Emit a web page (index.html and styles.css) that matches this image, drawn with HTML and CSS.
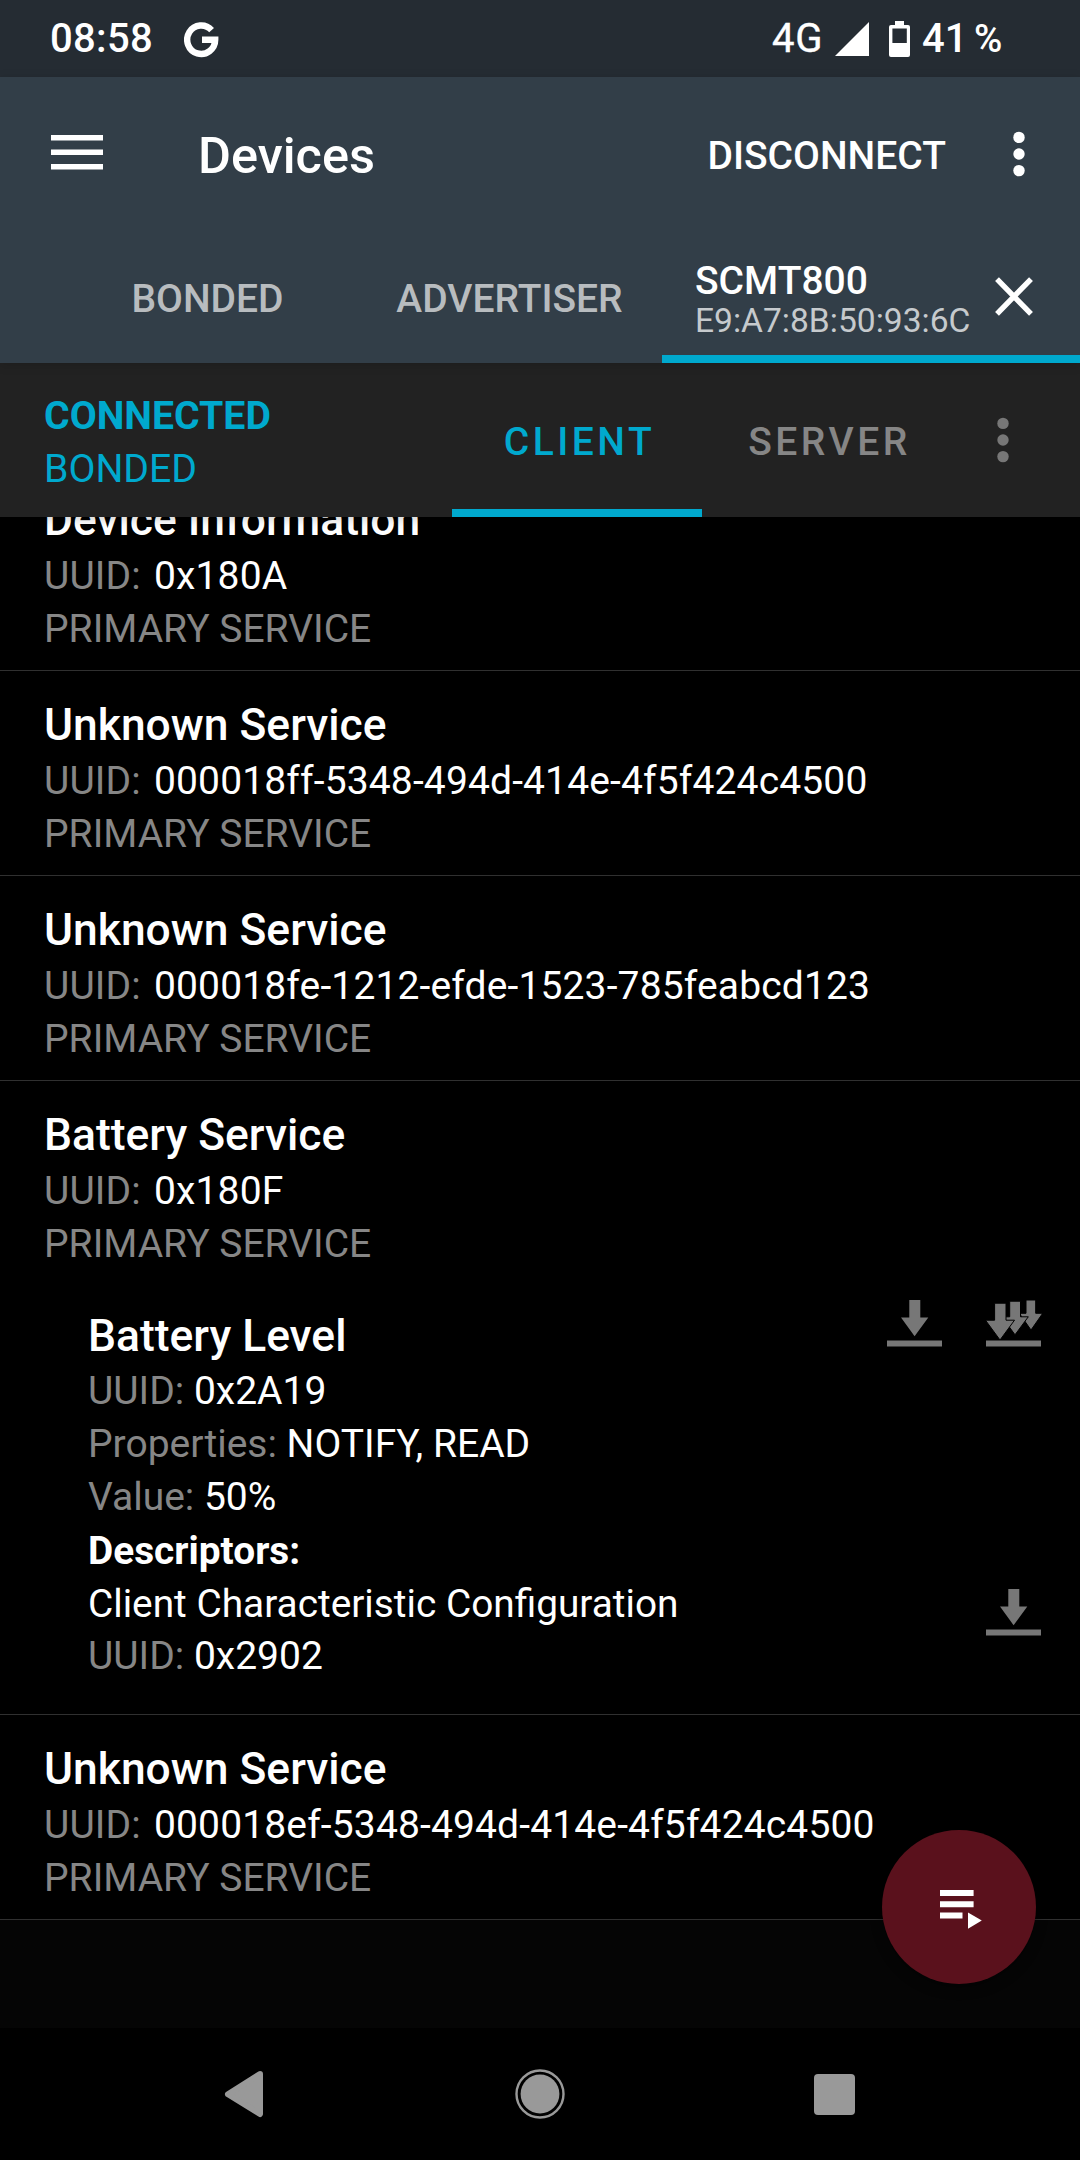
FILE: index.html
```html
<!DOCTYPE html>
<html lang="en">
<head>
  <meta charset="UTF-8">
  <meta name="viewport" content="width=device-width, initial-scale=1.0">
  <title>Devices</title>
  <link rel="stylesheet" href="styles.css">
</head>
<body>
  <div class="status-bar">
    <span class="clock">08:58</span>
    <svg class="google" width="36" height="36" viewBox="0 0 36 36">
      <path d="M27.6 8.2 A14 14.2 0 1 0 31.2 17.8 H18" fill="none" stroke="#fff" stroke-width="6.4"/>
    </svg>
    <span class="network">4G</span>
    <svg class="signal" width="34" height="34" viewBox="0 0 34 34"><path d="M34 0V34H0z" fill="#fff"/></svg>
    <svg class="battery" width="21" height="36" viewBox="0 0 21 36">
      <path d="M6 0h9v4h4a2 2 0 0 1 2 2v28a2 2 0 0 1-2 2H2a2 2 0 0 1-2-2V6a2 2 0 0 1 2-2h4z" fill="#fff"/>
      <path d="M3.4 7.5h14.4v14.5H3.4z" fill="#252c33"/>
    </svg>
    <span class="level">41</span>
    <span class="percent">%</span>
  </div>

  <header>
    <div class="toolbar">
      <svg class="menu" width="52" height="36" viewBox="0 0 52 36">
        <path d="M0 0h52v5.6H0zM0 14.5h52v5.6H0zM0 29h52v5.6H0z" fill="#fff"/>
      </svg>
      <h1>Devices</h1>
      <span class="disconnect">DISCONNECT</span>
      <svg class="more" width="12" height="46" viewBox="0 0 12 46">
        <circle cx="6" cy="6.4" r="5.7"/><circle cx="6" cy="23" r="5.7"/><circle cx="6" cy="39.6" r="5.7"/>
      </svg>
    </div>
    <div class="tabs">
      <div class="tab">BONDED</div>
      <div class="tab">ADVERTISER</div>
      <div class="tab active">
        <div class="device">
          <div class="name">SCMT800</div>
          <div class="address">E9:A7:8B:50:93:6C</div>
        </div>
        <svg class="close" width="38" height="39" viewBox="0 0 38 39">
          <path d="M2 2.2L36 36.8M36 2.2L2 36.8" stroke="#fff" stroke-width="5.4"/>
        </svg>
      </div>
    </div>
  </header>

  <div class="connection">
    <div class="state">
      <div class="connected">CONNECTED</div>
      <div>BONDED</div>
    </div>
    <div class="mode active">CLIENT</div>
    <div class="mode">SERVER</div>
    <svg class="more grey" width="12" height="46" viewBox="0 0 12 46">
      <circle cx="6" cy="6.4" r="5.7"/><circle cx="6" cy="23" r="5.7"/><circle cx="6" cy="39.6" r="5.7"/>
    </svg>
  </div>

  <main>
    <section class="service">
      <h2>Device Information</h2>
      <p class="uuid"><span class="label">UUID:</span>0x180A</p>
      <p class="type">PRIMARY SERVICE</p>
    </section>
    <section class="service">
      <h2>Unknown Service</h2>
      <p class="uuid"><span class="label">UUID:</span>000018ff-5348-494d-414e-4f5f424c4500</p>
      <p class="type">PRIMARY SERVICE</p>
    </section>
    <section class="service">
      <h2>Unknown Service</h2>
      <p class="uuid"><span class="label">UUID:</span>000018fe-1212-efde-1523-785feabcd123</p>
      <p class="type">PRIMARY SERVICE</p>
    </section>
    <section class="service expanded">
      <h2>Battery Service</h2>
      <p class="uuid"><span class="label">UUID:</span>0x180F</p>
      <p class="type">PRIMARY SERVICE</p>
      <div class="characteristic">
        <div class="row">
          <h2>Battery Level</h2>
          <div class="actions">
            <svg width="55" height="48" viewBox="0 0 55 48">
              <path d="M22.3 0h11v17.5h8L27.6 36.3 14 17.5h8.3zM0 40.5h55v6H0z"/>
            </svg>
            <svg width="56" height="48" viewBox="0 0 56 48">
              <g stroke="#000" stroke-width="1">
                <path d="M40 0h9.7v13.3h7L45 30 33.3 13.3H40z"/>
                <path d="M23.7 1.2h10.8v15.6h7.8L29 34.8 16 16.8h7.7z"/>
                <path d="M8.6 3.2h11.4v17h8.5L14 40 -.5 20.2h9.1z"/>
              </g>
              <path d="M0 40.5h55v6H0z"/>
            </svg>
          </div>
        </div>
        <p><span>UUID:</span> 0x2A19</p>
        <p><span>Properties:</span> NOTIFY, READ</p>
        <p><span>Value:</span> 50%</p>
        <p class="heading">Descriptors:</p>
        <div class="row">
          <div>
            <p class="descriptor">Client Characteristic Configuration</p>
            <p><span>UUID:</span> 0x2902</p>
          </div>
          <div class="actions single">
            <svg width="55" height="48" viewBox="0 0 55 48">
              <path d="M22.3 0h11v17.5h8L27.6 36.3 14 17.5h8.3zM0 40.5h55v6H0z"/>
            </svg>
          </div>
        </div>
      </div>
    </section>
    <section class="service">
      <h2>Unknown Service</h2>
      <p class="uuid"><span class="label">UUID:</span>000018ef-5348-494d-414e-4f5f424c4500</p>
      <p class="type">PRIMARY SERVICE</p>
    </section>
    <div class="fab">
      <svg width="42" height="40" viewBox="0 0 42 40">
        <path d="M0 0h33.6v6H0zM0 11.2h33.6v6H0zM0 22.4h22.5v6H0zM28 22.4L41.8 30.6 28 38.8z" fill="#fff"/>
      </svg>
    </div>
  </main>

  <nav>
    <svg width="40" height="48" viewBox="0 0 40 48">
      <path d="M36 4L4 24.3 36 44z" fill="#999" stroke="#999" stroke-width="6" stroke-linejoin="round"/>
    </svg>
    <svg class="home" width="50" height="50" viewBox="0 0 50 50">
      <circle cx="25" cy="25" r="19.4" fill="#999"/>
      <circle cx="25" cy="25" r="23.5" fill="none" stroke="#999" stroke-width="2.4"/>
    </svg>
    <div class="recent"></div>
  </nav>
</body>
</html>
```
FILE: styles.css
```css
* { box-sizing: border-box; }
body {
  margin: 0;
  width: 1080px;
  height: 2160px;
  display: flex;
  flex-direction: column;
  overflow: hidden;
  background: #000;
  color: #fff;
  font-family: Roboto, sans-serif;
  font-size: 39px;
}
h1, h2, p { margin: 0; }
svg { display: block; flex: none; }

.status-bar {
  height: 77px;
  padding-left: 50px;
  display: flex;
  align-items: center;
  background: #252c33;
  font-size: 40px;
  font-weight: 500;
  line-height: 77px;
}
.clock { width: 134px; letter-spacing: 0.3px; }
.google { margin-top: 2px; }
.network { margin-left: auto; width: 63px; font-weight: 400; letter-spacing: 0.8px; -webkit-text-stroke: 0.4px #fff; }
.signal { margin: 1px 20px 0 0; }
.battery { margin: 1px 12px 0 0; }
.level { width: 48px; }
.percent { width: 110px; font-size: 38.5px; text-indent: 4px; }

header {
  position: relative;
  z-index: 2;
  background: #323e48;
  box-shadow: 0 2px 10px rgba(0, 0, 0, 0.15);
}
.toolbar {
  height: 154px;
  padding: 0 55px 0 51px;
  display: flex;
  align-items: center;
}
.menu { margin-top: -2px; }
.toolbar h1 {
  margin-left: 95px;
  padding-top: 3px;
  font-size: 50.5px;
  font-weight: 500;
}
.disconnect {
  margin: 0 67px 0 auto;
  padding-top: 3px;
  font-weight: 500;
}
.more { fill: #fff; }
.more.grey { fill: #777; }

.tabs {
  height: 132px;
  padding-left: 58px;
  display: grid;
  grid-template-columns: 299px 305px 1fr;
}
.tab {
  padding-top: 3px;
  display: flex;
  align-items: center;
  justify-content: center;
  color: #b8bcbf;
  font-weight: 500;
}
.tab.active {
  padding: 27px 47px 0 33px;
  align-items: flex-start;
  justify-content: space-between;
  border-bottom: 8px solid #00a9ce;
  color: #fff;
}
.name { line-height: 46px; }
.address { color: #c6cacd; font-size: 33.6px; font-weight: 400; line-height: 34px; }
.close { margin-top: 19px; }

.connection {
  position: relative;
  z-index: 1;
  height: 154px;
  display: flex;
  background: #222;
  box-shadow: 0 2px 10px rgba(0, 0, 0, 0.2);
}
.state {
  width: 452px;
  padding: 27px 0 0 44px;
  color: #00a9ce;
  font-size: 39.2px;
  line-height: 53px;
}
.connected { font-weight: 700; }
.mode {
  width: 250px;
  padding: 11px 0 0 5px;
  border-bottom: 8px solid transparent;
  color: #868686;
  font-weight: 500;
  letter-spacing: 3.5px;
  line-height: 137px;
  text-align: center;
}
.mode.active { border-color: #00a9ce; color: #00a9ce; }
.connection .more { margin: 54px 0 0 45px; }

main {
  position: relative;
  height: 1511px;
  overflow: hidden;
  background: #050505;
}
.service {
  height: 205px;
  padding: 26px 0 0 44px;
  background: #000;
  border-bottom: 1px solid #303030;
  line-height: 53px;
}
/* list is scrolled a little under the connection bar */
.service:first-child { margin-top: -51px; }
.service.expanded { height: 634px; }
.service h2 { font-size: 44.4px; font-weight: 500; line-height: 57px; }
.service > h2 { margin-bottom: 1px; }
.uuid { letter-spacing: 0.14px; }
.label { display: inline-block; width: 110px; }
.label, .type, .characteristic span { color: #868686; }
.characteristic { margin: 37px 0 0 44px; }
.row { display: flex; justify-content: space-between; }
.heading { font-weight: 700; font-size: 38.8px; }
.descriptor { font-size: 38.8px; }
.actions {
  height: 48px;
  margin: -8px 38px 0 0;
  display: flex;
  gap: 44px;
  fill: #777;
}
.actions.single { margin: 12px 39px 0 0; }

.fab {
  position: absolute;
  right: 44px;
  bottom: 44px;
  width: 154px;
  height: 154px;
  padding: 60px 0 0 58px;
  border-radius: 50%;
  background: #5a111c;
  box-shadow: 0 4px 12px rgba(0, 0, 0, 0.4);
}

nav {
  height: 132px;
  padding: 0 225px 0 224px;
  display: flex;
  align-items: center;
  justify-content: space-between;
}
.home { margin-left: 2px; }
.recent { width: 41px; height: 41px; border-radius: 4px; background: #999; }
```
